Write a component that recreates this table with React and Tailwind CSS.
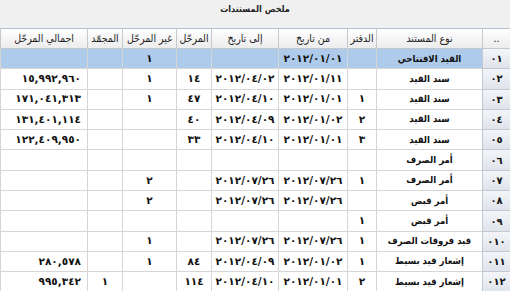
const COLS = [
  { key: 'n', label: '..', w: 'w-[28px]' },
  { key: 'type', label: 'نوع المستند', w: 'w-[106px]' },
  { key: 'book', label: 'الدفتر', w: 'w-[29px]' },
  { key: 'from', label: 'من تاريخ', w: 'w-[69px]' },
  { key: 'to', label: 'إلى تاريخ', w: 'w-[67px]' },
  { key: 'posted', label: 'المرحّل', w: 'w-[35px]' },
  { key: 'unposted', label: 'غير المرحّل', w: 'w-[54px]' },
  { key: 'frozen', label: 'المجمّد', w: 'w-[35px]' },
  { key: 'total', label: 'اجمالي المرحّل', w: 'w-[87px]' },
]

const ROWS = [
  { n: '٠١', type: 'القيد الافتتاحي', book: '', from: '٢٠١٢/٠١/٠١', to: '', posted: '', unposted: '١', frozen: '', total: '' },
  { n: '٠٢', type: 'سند القيد', book: '', from: '٢٠١٢/٠١/١١', to: '٢٠١٢/٠٤/٠٢', posted: '١٤', unposted: '١', frozen: '', total: '١٥,٩٩٢,٩٦٠' },
  { n: '٠٣', type: 'سند القيد', book: '١', from: '٢٠١٢/٠١/٠١', to: '٢٠١٢/٠٤/١٠', posted: '٤٧', unposted: '١', frozen: '', total: '١٧١,٠٤١,٣١٣' },
  { n: '٠٤', type: 'سند القيد', book: '٢', from: '٢٠١٢/٠١/٠٢', to: '٢٠١٢/٠٤/٠٩', posted: '٤٠', unposted: '', frozen: '', total: '١٣١,٤٠١,١١٤' },
  { n: '٠٥', type: 'سند القيد', book: '٣', from: '٢٠١٢/٠١/٠١', to: '٢٠١٢/٠٤/١٠', posted: '٣٣', unposted: '', frozen: '', total: '١٢٢,٤٠٩,٩٥٠' },
  { n: '٠٦', type: 'أمر الصرف', book: '', from: '', to: '', posted: '', unposted: '', frozen: '', total: '' },
  { n: '٠٧', type: 'أمر الصرف', book: '١', from: '٢٠١٢/٠٧/٢٦', to: '٢٠١٢/٠٧/٢٦', posted: '', unposted: '٢', frozen: '', total: '' },
  { n: '٠٨', type: 'أمر قبض', book: '', from: '٢٠١٢/٠٧/٢٦', to: '٢٠١٢/٠٧/٢٦', posted: '', unposted: '٢', frozen: '', total: '' },
  { n: '٠٩', type: 'أمر قبض', book: '١', from: '', to: '', posted: '', unposted: '', frozen: '', total: '' },
  { n: '٠١٠', type: 'قيد فروقات الصرف', book: '١', from: '٢٠١٢/٠٧/٢٦', to: '٢٠١٢/٠٧/٢٦', posted: '', unposted: '١', frozen: '', total: '' },
  { n: '٠١١', type: 'إشعار قيد بسيط', book: '١', from: '٢٠١٢/٠١/٠٢', to: '٢٠١٢/٠٤/٠٩', posted: '٨٤', unposted: '١', frozen: '', total: '٢٨٠,٥٧٨' },
  { n: '٠١٢', type: 'إشعار قيد بسيط', book: '٢', from: '٢٠١٢/٠١/٠١', to: '٢٠١٢/٠٤/١٠', posted: '١١٤', unposted: '', frozen: '١', total: '٩٩٥,٣٤٢' },
]

export default function App() {
  return (
    <div
      dir="rtl"
      className="w-[510px] h-[291px] overflow-hidden bg-[#f0f0f0] text-[#111] font-['DejaVu_Sans',sans-serif]"
    >
      {/* Title */}
      <div className="h-[28px] pt-[3px] text-center text-[9px] font-bold text-[#222] font-['DejaVu_Sans_Condensed','DejaVu_Sans',sans-serif]">
        ملخص المستندات
      </div>

      {/* Header */}
      <div className="flex h-[21px] border-t border-[#b4bfcc]">
        {COLS.map((c) => (
          <div
            key={c.key}
            className={`${c.w} shrink-0 flex items-center justify-center whitespace-nowrap border-l border-b border-[#c4c8ce] bg-gradient-to-b from-white to-[#ececec] text-[10.5px] text-[#222] font-['DejaVu_Sans_Condensed','DejaVu_Sans',sans-serif]`}
          >
            {c.label}
          </div>
        ))}
      </div>

      {/* Rows */}
      {ROWS.map((r, i) => {
        const selected = i === 0
        return (
          <div key={r.n} className={`flex h-[20.3px] ${selected ? 'bg-[#aecbeb]' : 'bg-white'}`}>
            {COLS.map((c) => {
              if (c.key === 'n') {
                return (
                  <div
                    key={c.key}
                    className={`${c.w} shrink-0 flex items-center justify-center border-l border-b border-[#c2c9d4] bg-gradient-to-b from-[#f3f5f8] to-[#dfe4eb] text-[10px] font-bold`}
                  >
                    {r.n}
                  </div>
                )
              }
              if (c.key === 'type') {
                return (
                  <div
                    key={c.key}
                    className={`${c.w} shrink-0 flex items-center justify-center whitespace-nowrap border-l border-b border-[#d6d6d6] text-[9.5px] font-bold font-['DejaVu_Sans_Condensed','DejaVu_Sans',sans-serif]`}
                  >
                    {r.type}
                  </div>
                )
              }
              const align = c.key === 'total' ? 'justify-start pr-[6px]' : 'justify-center'
              return (
                <div
                  key={c.key}
                  className={`${c.w} shrink-0 flex items-center ${align} border-l border-b border-[#d6d6d6] text-[10.5px] font-bold`}
                >
                  {r[c.key] && <span dir="ltr">{r[c.key]}</span>}
                </div>
              )
            })}
          </div>
        )
      })}
    </div>
  )
}
